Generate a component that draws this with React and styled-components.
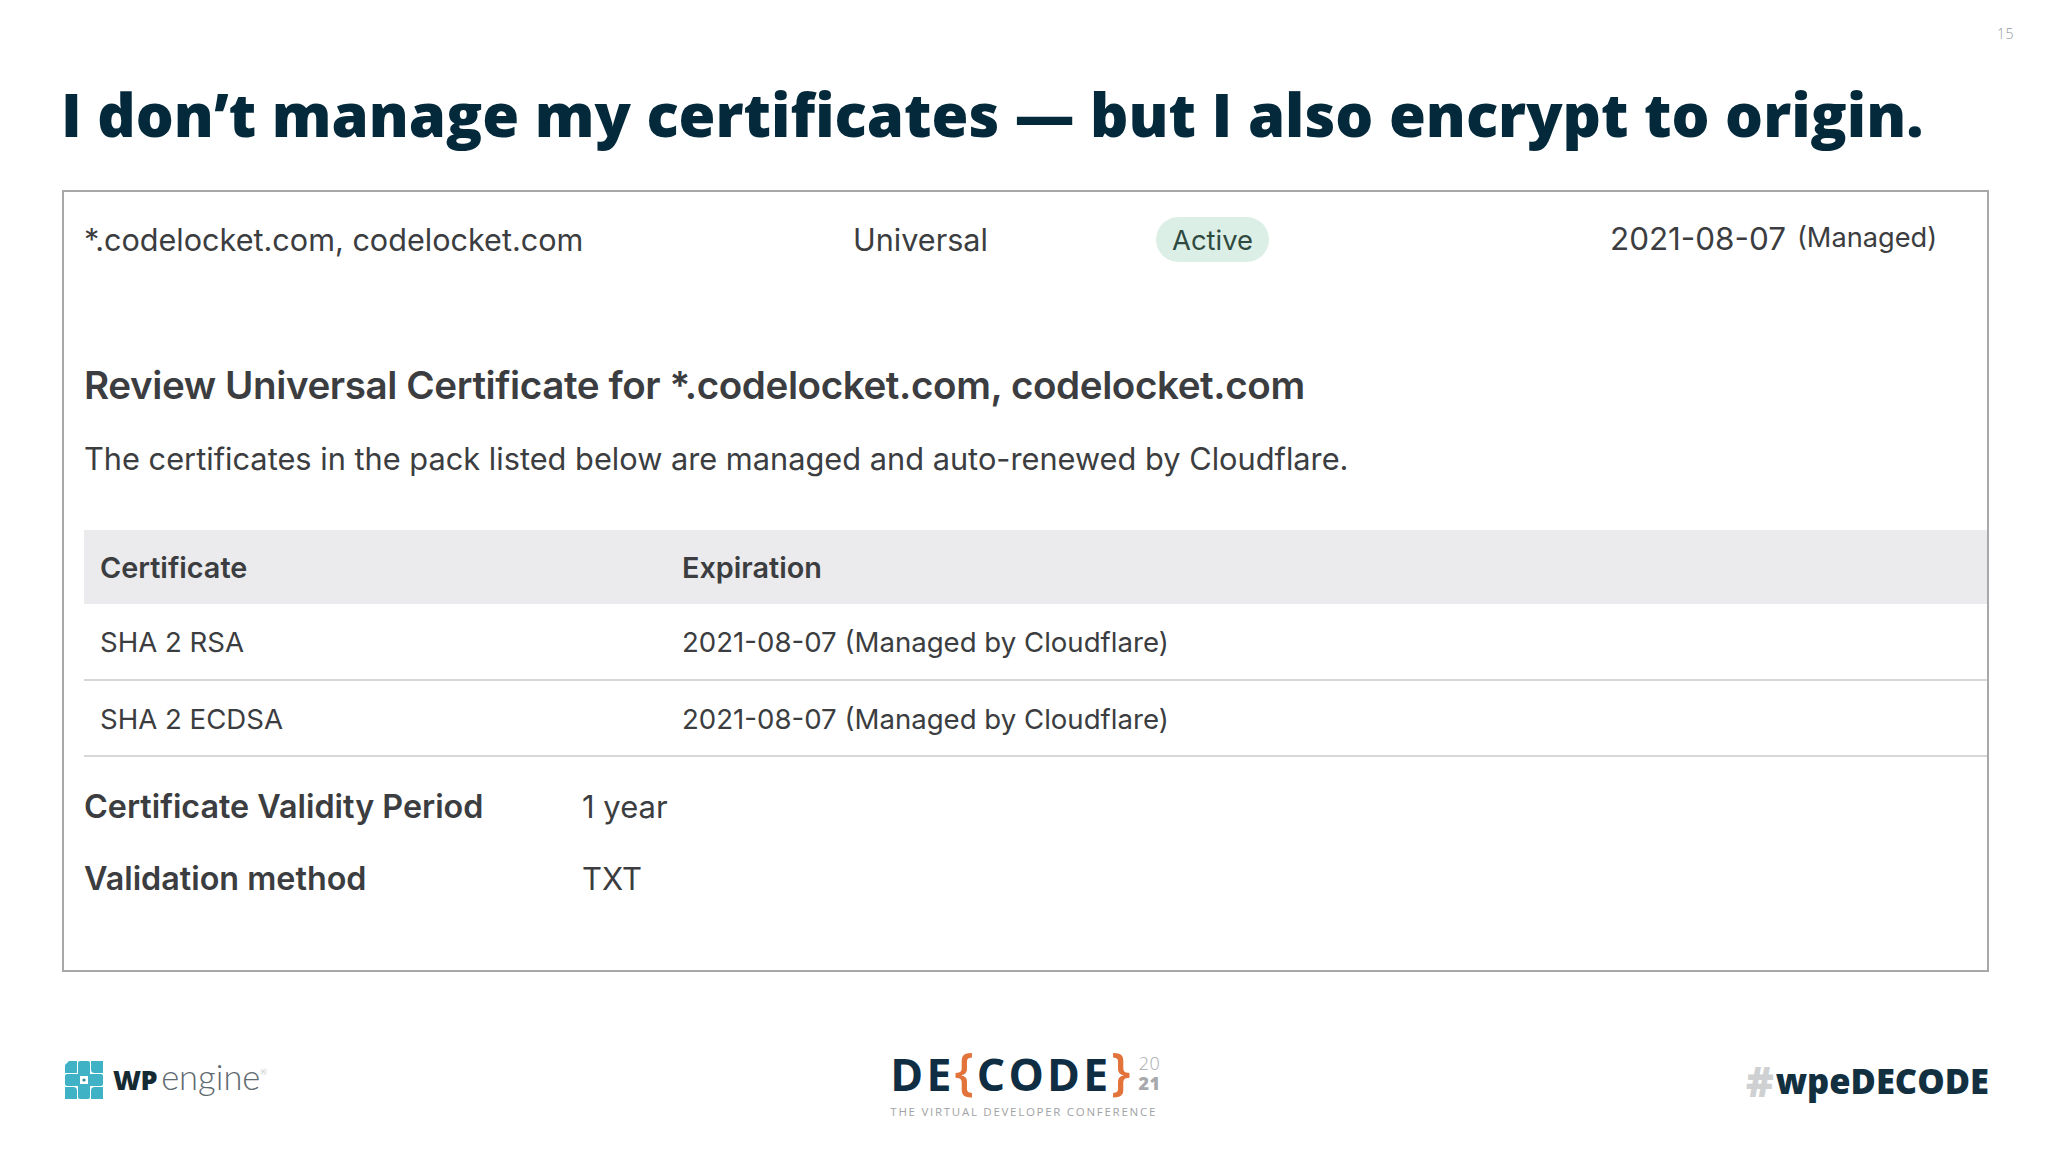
import React from 'react';
import styled, { createGlobalStyle } from 'styled-components';

const GlobalStyle = createGlobalStyle`
  html, body {
    margin: 0;
    padding: 0;
    background: #fff;
  }
`;

const Slide = styled.div`
  width: 2048px;
  height: 1152px;
  box-sizing: border-box;
  padding: 26px 59px 0 62px;
  background: #fff;
  display: flex;
  flex-direction: column;
  overflow: hidden;
  font-family: 'Inter', 'Liberation Sans', sans-serif;
`;

const PageNumber = styled.div`
  align-self: flex-end;
  margin-right: -25px;
  height: 16px;
  font-family: 'Open Sans', sans-serif;
  font-size: 14px;
  font-weight: 300;
  line-height: 16px;
  letter-spacing: 0.5px;
  color: #8f979b;
`;

const Title = styled.h1`
  margin: 29px 0 0 -1px;
  height: 87px;
  font-family: 'Open Sans', sans-serif;
  font-size: 59.75px;
  font-weight: 800;
  line-height: 87px;
  color: #04293a;
  white-space: nowrap;
`;

const Frame = styled.div`
  margin-top: 32px;
  height: 782px;
  box-sizing: border-box;
  border: 2px solid #a6a8aa;
  padding: 0 0 0 20px;
  color: #3b3d40;
`;

const SummaryRow = styled.div`
  height: 94px;
  display: grid;
  grid-template-columns: 769px 303px 454px 1fr;
  align-items: center;
  font-size: 30.6px;
`;

const Badge = styled.span`
  display: inline-block;
  padding: 0 16px;
  height: 45px;
  line-height: 47px;
  border-radius: 23px;
  background: #dcefe6;
  color: #2f4a3f;
  font-size: 27.4px;
`;

const DateText = styled.span`
  font-size: 31.4px;
`;

const Managed = styled.span`
  margin-left: 11px;
  font-size: 27.2px;
  position: relative;
  top: -3px;
`;

const Heading = styled.h2`
  margin: 74px 0 0;
  font-size: 38.6px;
  font-weight: 600;
  line-height: 50px;
  letter-spacing: -0.4px;
`;

const Description = styled.p`
  margin: 25px 0 0;
  font-size: 30.75px;
  line-height: 48px;
`;

const CertTable = styled.div`
  margin-top: 47px;
  display: flex;
  flex-direction: column;
`;

const CertRow = styled.div`
  display: grid;
  grid-template-columns: 582px 1fr;
  align-items: center;
  height: ${p => (p.$head ? '74px' : '76.5px')};
  padding-left: 16px;
  padding-top: ${p => (p.$head ? '0' : '2px')};
  font-size: ${p => (p.$head ? '28.8px' : '27.6px')};
  font-weight: ${p => (p.$head ? 600 : 400)};
  background: ${p => (p.$head ? '#ebebed' : 'transparent')};
  border-bottom: ${p => (p.$head ? 'none' : '2px solid #d6d7d9')};
  box-sizing: border-box;
`;

const DetailList = styled.div`
  margin-top: 13px;
  display: flex;
  flex-direction: column;
`;

const DetailRow = styled.div`
  height: 72px;
  display: grid;
  grid-template-columns: 498px 1fr;
  align-items: center;
  font-size: 31px;
`;

const DetailLabel = styled.span`
  font-size: 32.3px;
  font-weight: 600;
`;

const Footer = styled.div`
  flex: 1;
  display: grid;
  grid-template-columns: 1fr auto 1fr;
  align-items: start;
`;

const WpLogo = styled.div`
  margin: 87px 0 0 3px;
  display: flex;
  align-items: center;
  gap: 10px;
  color: #162a33;
`;

const WpMark = styled.span`
  font-family: 'Open Sans', sans-serif;
  font-size: 27px;
  font-weight: 800;
  letter-spacing: -0.5px;
`;

const WpEngine = styled.span`
  margin-left: -6px;
  font-family: 'Lato', sans-serif;
  font-size: 34.5px;
  font-weight: 300;
  color: #5f6a70;
  position: relative;
  top: -3px;
`;

const Registered = styled.sup`
  font-size: 8px;
  color: #8a9296;
  position: relative;
  top: -3px;
`;

const DecodeLogo = styled.div`
  margin-top: 72px;
  display: flex;
  flex-direction: column;
  align-items: stretch;
`;

const DecodeTop = styled.div`
  display: flex;
  align-items: center;
  height: 58px;
`;

const DecodeWord = styled.span`
  font-family: 'Open Sans', sans-serif;
  font-size: 44.5px;
  font-weight: 700;
  letter-spacing: 3.2px;
  color: #0f2d43;
`;

const Brace = styled.span`
  font-family: 'Open Sans', sans-serif;
  font-size: 50px;
  font-weight: 600;
  color: #e2733a;
  position: relative;
  top: -3px;
  margin-right: 3px;
`;

const YearStack = styled.div`
  margin-left: 5px;
  display: flex;
  flex-direction: column;
  align-items: center;
  font-family: 'Open Sans', sans-serif;
  font-size: 18px;
  line-height: 20px;
  letter-spacing: 0.5px;
  color: #a7a9ac;
`;

const YearBold = styled.span`
  font-weight: 800;
`;

const YearLight = styled.span`
  font-weight: 300;
`;

const DecodeTag = styled.div`
  margin-top: 2px;
  font-family: 'Open Sans', sans-serif;
  font-size: 11.5px;
  letter-spacing: 1.72px;
  color: #a0a3a6;
  white-space: nowrap;
`;

const Hashtag = styled.div`
  justify-self: end;
  margin-top: 85px;
  display: flex;
  align-items: center;
  gap: 2px;
  font-family: 'Open Sans', sans-serif;
  font-size: 34.5px;
  font-weight: 800;
  color: #12303f;
`;

const HashMark = styled.span`
  font-size: 42px;
  line-height: 1;
  color: #cfd0d2;
`;

const tile = '#3fb2c6';

const WpIcon = () => (
  <svg width="38" height="38" viewBox="0 0 38 38">
    <g fill={tile}>
      <path d="M4 0H12V12H0V4Z" />
      <rect x="13" width="12" height="15" rx="2" />
      <path d="M26 0H38V12H29.5A3.5 3.5 0 0 1 26 8.5Z" />
      <rect y="13" width="15" height="12" rx="2" />
      <rect x="23" y="13" width="15" height="12" rx="2" />
      <path d="M0 26H8.5A3.5 3.5 0 0 1 12 29.5V38H0Z" />
      <rect x="13" y="23" width="12" height="15" rx="2" />
      <path d="M29.5 26H38V38H26V29.5A3.5 3.5 0 0 1 29.5 26Z" />
    </g>
    <circle cx="19" cy="19" r="1.6" fill="#2a8a9b" />
  </svg>
);

const App = () => (
  <Slide>
    <GlobalStyle />
    <PageNumber>15</PageNumber>
    <Title>I don’t manage my certificates — but I also encrypt to origin.</Title>

    <Frame>
      <SummaryRow>
        <span>*.codelocket.com, codelocket.com</span>
        <span>Universal</span>
        <span><Badge>Active</Badge></span>
        <span><DateText>2021-08-07</DateText><Managed>(Managed)</Managed></span>
      </SummaryRow>

      <Heading>Review Universal Certificate for *.codelocket.com, codelocket.com</Heading>
      <Description>The certificates in the pack listed below are managed and auto-renewed by Cloudflare.</Description>

      <CertTable>
        <CertRow $head>
          <span>Certificate</span>
          <span>Expiration</span>
        </CertRow>
        <CertRow>
          <span>SHA 2 RSA</span>
          <span>2021-08-07 (Managed by Cloudflare)</span>
        </CertRow>
        <CertRow>
          <span>SHA 2 ECDSA</span>
          <span>2021-08-07 (Managed by Cloudflare)</span>
        </CertRow>
      </CertTable>

      <DetailList>
        <DetailRow>
          <DetailLabel>Certificate Validity Period</DetailLabel>
          <span>1 year</span>
        </DetailRow>
        <DetailRow>
          <DetailLabel>Validation method</DetailLabel>
          <span>TXT</span>
        </DetailRow>
      </DetailList>
    </Frame>

    <Footer>
      <WpLogo>
        <WpIcon />
        <WpMark>WP</WpMark>
        <WpEngine>engine<Registered>®</Registered></WpEngine>
      </WpLogo>

      <DecodeLogo>
        <DecodeTop>
          <DecodeWord>DE</DecodeWord>
          <Brace>{'{'}</Brace>
          <DecodeWord>CODE</DecodeWord>
          <Brace>{'}'}</Brace>
          <YearStack>
            <YearLight>20</YearLight>
            <YearBold>21</YearBold>
          </YearStack>
        </DecodeTop>
        <DecodeTag>THE VIRTUAL DEVELOPER CONFERENCE</DecodeTag>
      </DecodeLogo>

      <Hashtag><HashMark>#</HashMark>wpeDECODE</Hashtag>
    </Footer>
  </Slide>
);

export default App;
